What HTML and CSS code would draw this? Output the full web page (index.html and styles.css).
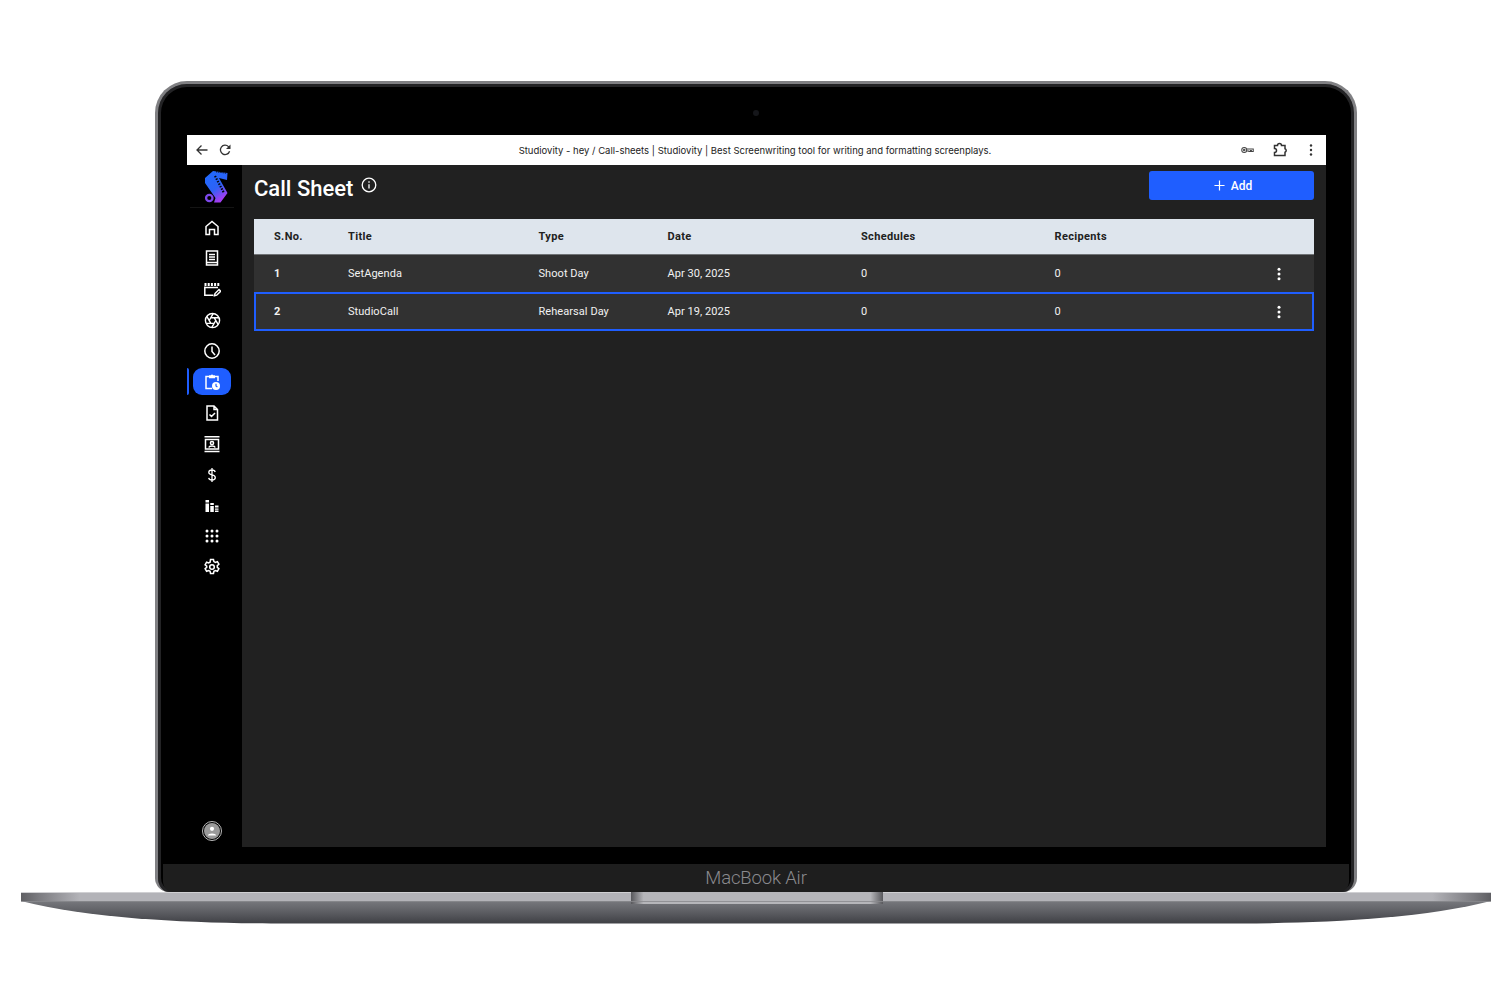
FILE: index.html
```html
<!DOCTYPE html>
<html lang="en">
<head>
<meta charset="utf-8">
<title>Call Sheet</title>
<link rel="stylesheet" href="styles.css">
</head>
<body>
<div class="stage">
  <div class="lid">
    <div class="bezel-top"><span class="camera"></span></div>
    <div class="screen">
      <div class="toolbar">
        <div class="nav-btns">
          <svg class="tb-icon" viewBox="0 0 14 14"><path d="M12.500 7H2M6.500 2.500 2 7l4.500 4.500"/></svg>
          <svg class="tb-icon" viewBox="0 0 14 14"><path d="M11.600 8.300A4.700 4.700 0 1 1 10.500 3.600L11.800 5"/><path class="solid" d="M12.500 1.500V6H8z"/></svg>
        </div>
        <div class="page-title">Studiovity - hey / Call-sheets | Studiovity | Best Screenwriting tool for writing and formatting screenplays.</div>
        <div class="tb-right">
          <svg class="key" viewBox="0 0 14 8"><circle cx="3.500" cy="4" r="2.700"/><circle cx="3.500" cy="4" r=".8"/><path d="M6.200 3h7v2.500h-2v-1h-1v1H8.500V5H6.200"/></svg>
          <svg class="puzzle" viewBox="0 0 16 16"><path d="M2.500 3.500h3a2 2 0 0 1 4 0h3.500v3.300a1.800 1.800 0 0 1 0 3.400v3.300H2.500v-3a2 2 0 0 0 0-4z"/></svg>
          <svg class="dots-dark" viewBox="0 0 4 14"><circle cx="2" cy="2.500" r="1.200"/><circle cx="2" cy="7" r="1.200"/><circle cx="2" cy="11.500" r="1.200"/></svg>
        </div>
      </div>
      <div class="app">
        <aside class="sidebar">
          <svg class="logo" viewBox="0 0 23 32">
            <defs><linearGradient id="lg" x1="0" y1="0" x2=".5" y2="1"><stop offset="0" stop-color="#1f6bff"/><stop offset=".62" stop-color="#2c62f5"/><stop offset="1" stop-color="#a23df2"/></linearGradient></defs>
            <path fill="url(#lg)" d="M0 7 8 0 22.500 2 22 9 14 7 22.500 22 15.500 31.500H9L10.500 27 0 12Z"/>
            <path class="perf" d="M10 5 19 22"/>
            <path class="perf-top" d="M11 .8 22 2.300"/>
            <circle cx="4.300" cy="27" r="3.200" fill="none" stroke="#7d48ea" stroke-width="2.300"/>
          </svg>
          <div class="side-rule"></div>
          <nav class="side-nav">
            <a class="side-item"><svg viewBox="0 0 18 18"><path d="M3 7.500 9 2.500l6 5V15.500h-3.500V10.500h-5V15.500H3z"/></svg></a>
            <a class="side-item"><svg viewBox="0 0 18 18"><path d="M3.500 2h11v14h-11zM6 5.500h6M6 8h6M6 10.500h6M3.500 13.500h11"/></svg></a>
            <a class="side-item"><svg viewBox="0 0 18 18"><path class="stripes" d="M1.500 4.500h15"/><path d="M1.800 6.500V15.200H10.500M1.800 7.500H15"/><path d="M11.500 15.800l.5-2.300 4-4 1.700 1.700-4 4z"/></svg></a>
            <a class="side-item"><svg viewBox="0 0 24 24" class="aperture"><circle cx="12" cy="12" r="10"/><path d="M14.310 8l5.740 9.940M9.690 8h11.480M7.380 12l5.740-9.940M9.690 16 3.950 6.060M14.310 16H2.830M16.620 12l-5.740 9.940"/></svg></a>
            <a class="side-item"><svg viewBox="0 0 18 18"><circle cx="9" cy="9" r="7.200"/><path d="M9 4.500V9.500l3 3.500"/></svg></a>
            <a class="side-item is-active"><svg viewBox="0 0 18 18"><path d="M6 3.500H3v12h6M12 3.500h3v4.500"/><path class="fillw" d="M6 2.200h1.800a1.300 1.300 0 0 1 2.400 0H12v3H6z"/><circle class="fillw" cx="13" cy="13" r="4"/><path class="inv" d="M13 10.800V13l1.400 1"/></svg></a>
            <a class="side-item"><svg viewBox="0 0 18 18"><path d="M4 2h7l3.500 3.500V16H4zM11 2v3.500h3.500M6.500 10.500 8.500 12.500 12 9"/></svg></a>
            <a class="side-item"><svg viewBox="0 0 18 18"><path d="M2.500 4.500h13v9.500h-13zM1.500 1.800h15M1.500 16.500h15"/><circle cx="9" cy="8" r="1.600"/><path d="M5.800 12.500c.6-2 5.800-2 6.400 0"/></svg></a>
            <a class="side-item"><svg viewBox="0 0 18 18" class="thin"><path d="M12.200 6c-.3-1.400-1.500-2-3.200-2-1.800 0-3.200.9-3.200 2.400 0 3.300 6.500 1.800 6.500 5.100 0 1.500-1.400 2.500-3.300 2.500-1.700 0-3-.7-3.300-2.100M9 2v14"/></svg></a>
            <a class="side-item"><svg viewBox="0 0 18 18"><path class="fillw" d="M2.500 3h3.500v2.500H2.500zM2.500 6.500h3.500V15H2.500zM7.300 6h3.500v2H7.300zM7.300 9h3.500v6H7.300zM12 8.500h3.500v2H12zM12 11.500h3.500v1.300H12zM12 13.500h3.500V15H12z"/></svg></a>
            <a class="side-item"><svg viewBox="0 0 18 18"><g class="fillw"><circle cx="4" cy="4" r="1.500"/><circle cx="9" cy="4" r="1.500"/><circle cx="14" cy="4" r="1.500"/><circle cx="4" cy="9" r="1.500"/><circle cx="9" cy="9" r="1.500"/><circle cx="14" cy="9" r="1.500"/><circle cx="4" cy="14" r="1.500"/><circle cx="9" cy="14" r="1.500"/><circle cx="14" cy="14" r="1.500"/></g></svg></a>
            <a class="side-item"><svg viewBox="0 0 18 18"><path d="M7.500 1.500h3l.4 2.100 1.500.8 2-.8 1.500 2.600-1.600 1.400v1.700l1.600 1.400-1.500 2.600-2-.8-1.500.8-.4 2.100h-3l-.4-2.100-1.500-.8-2 .8-1.500-2.600 1.600-1.400V8.200L2.100 6.800 3.600 4.200l2 .8 1.500-.8z"/><circle cx="9" cy="9" r="2.300"/></svg></a>
          </nav>
          <div class="avatar"><span class="avatar-in"><svg viewBox="0 0 12 12"><circle cx="6" cy="3.800" r="2.100"/><path d="M1.800 10.500c0-2.700 8.400-2.700 8.400 0z"/></svg></span></div>
        </aside>
        <main class="main">
          <header class="page-head">
            <div class="head-left">
              <h1 class="heading">Call Sheet</h1>
              <svg class="info" viewBox="0 0 16 16"><circle cx="8" cy="8" r="6.800"/><path d="M8 7.200V11.500"/><path d="M8 4.200V5.700"/></svg>
            </div>
            <button class="add-btn"><svg viewBox="0 0 12 12"><path d="M6 .5v11M.5 6h11"/></svg><span>Add</span></button>
          </header>
          <div class="table">
            <div class="row head"><div>S.No.</div><div>Title</div><div>Type</div><div>Date</div><div>Schedules</div><div>Recipents</div><div></div></div>
            <div class="row body"><div class="sno">1</div><div>SetAgenda</div><div>Shoot Day</div><div>Apr 30, 2025</div><div>0</div><div>0</div><div class="act"><svg class="kebab" viewBox="0 0 4 14"><circle cx="2" cy="2.200" r="1.500"/><circle cx="2" cy="7" r="1.500"/><circle cx="2" cy="11.800" r="1.500"/></svg></div></div>
            <div class="row body selected"><div class="sno">2</div><div>StudioCall</div><div>Rehearsal Day</div><div>Apr 19, 2025</div><div>0</div><div>0</div><div class="act"><svg class="kebab" viewBox="0 0 4 14"><circle cx="2" cy="2.200" r="1.500"/><circle cx="2" cy="7" r="1.500"/><circle cx="2" cy="11.800" r="1.500"/></svg></div></div>
          </div>
        </main>
      </div>
    </div>
    <div class="chin-black"></div>
    <div class="chin"><span class="model">MacBook Air</span></div>
  </div>
  <svg class="base" viewBox="0 0 1470 32" aria-hidden="true">
    <defs>
      <linearGradient id="band" x1="0" x2="1" y1="0" y2="0">
        <stop offset="0" stop-color="#5f5f63"/><stop offset=".012" stop-color="#7b7b80"/><stop offset=".04" stop-color="#b3b3b8"/><stop offset=".96" stop-color="#b3b3b8"/><stop offset=".988" stop-color="#7b7b80"/><stop offset="1" stop-color="#5f5f63"/>
      </linearGradient>
      <linearGradient id="under" x1="0" x2="0" y1="0" y2="1">
        <stop offset="0" stop-color="#77787d"/><stop offset=".4" stop-color="#626368"/><stop offset="1" stop-color="#3f4045"/>
      </linearGradient>
      <linearGradient id="notch" x1="0" x2="1" y1="0" y2="0">
        <stop offset="0" stop-color="#58585c"/><stop offset=".05" stop-color="#b6b6ba"/><stop offset=".95" stop-color="#b6b6ba"/><stop offset="1" stop-color="#58585c"/>
      </linearGradient>
    </defs>
    <path fill="url(#under)" d="M0 9H1470C1400 27 1300 31 1220 31.500H250C170 31 70 27 0 9Z"/>
    <rect width="1470" height="9" fill="url(#band)"/>
    <rect width="1470" height="1" fill="#d0d0d3"/>
    <rect x="610" width="252" height="12" fill="url(#notch)"/>
    <rect x="0" y="9" width="1470" height=".8" fill="#8a8a8e"/>
  </svg>
</div>
</body>
</html>
```
FILE: styles.css
```css
* { box-sizing: border-box; }
html, body { margin: 0; height: 982px; background: #fff; overflow: hidden; }
body { font-family: Roboto, "Liberation Sans", sans-serif; color: #fff; }

.stage { display: flex; flex-direction: column; align-items: center; padding-top: 81px; }

.lid {
  width: 1202px; height: 811px;
  display: flex; flex-direction: column;
  background: #000;
  border: 3px solid #808083; border-bottom: 0;
  border-radius: 32px 32px 14px 14px / 32px 32px 14px 14px;
  box-shadow: inset 0 0 0 3px #232325;
}
.bezel-top { height: 51px; flex: none; display: flex; align-items: flex-start; justify-content: center; padding-top: 26px; }
.camera { width: 6px; height: 6px; border-radius: 50%; background: #15161a; }

.screen { width: 1139px; height: 712px; flex: none; margin-left: 29px; display: flex; flex-direction: column; }

.toolbar { height: 30px; flex: none; background: #fff; color: #222; display: grid; grid-template-columns: 1fr auto 1fr; align-items: center; padding: 0 11px 0 8px; }
.nav-btns { display: flex; gap: 9px; align-items: center; }
.tb-icon { width: 14px; height: 14px; fill: none; stroke: #333; stroke-width: 1.300; }
.tb-icon .solid { fill: #333; stroke: none; }
.page-title { text-align: center; font-family: Inter, Roboto, sans-serif; font-size: 9.500px; color: #222; white-space: nowrap; }
.tb-right { display: flex; align-items: center; justify-content: flex-end; gap: 18px; }
.key { width: 13px; height: 8px; fill: none; stroke: #444; stroke-width: 1.100; }
.puzzle { width: 16px; height: 16px; fill: none; stroke: #333; stroke-width: 1.500; }
.dots-dark { width: 4px; height: 14px; fill: #333; margin-left: 3px; margin-right: 2px; }

.app { flex: 1; display: flex; min-height: 0; }

.sidebar { width: 55px; flex: none; background: #000; padding-right: 5px; display: flex; flex-direction: column; align-items: center; }
.logo { width: 23px; height: 32px; margin: 6px 0 0 8px; flex: none; }
.perf { fill: none; stroke: #05060c; stroke-width: 2.200; stroke-dasharray: 1.500 1.300; }
.perf-top { fill: none; stroke: #05060c; stroke-width: 1; stroke-dasharray: 1.200 1; }
.side-rule { width: 44px; height: 1px; background: #141414; margin-top: 4px; flex: none; }
.side-nav { display: flex; flex-direction: column; margin-top: 6px; align-items: center; width: 100%; }
.side-item { width: 38px; height: 27px; margin-bottom: 3.900px; border-radius: 9px; display: flex; align-items: center; justify-content: center; position: relative; }
.side-item svg { width: 18px; height: 18px; fill: none; stroke: #fff; stroke-width: 1.500; }
.side-item svg .fillw { fill: #fff; stroke: none; }
.side-item svg .stripes { stroke-width: 3; stroke-dasharray: 2 1.200; }
.side-item svg.aperture { stroke-width: 2; width: 17px; height: 17px; }
.side-item svg.thin { stroke-width: 1.300; }
.side-item.is-active { background: #1f5eff; }
.side-item.is-active .inv { stroke: #1f5eff; stroke-width: 1.200; }
.side-item.is-active::before { content: ""; position: absolute; left: -6px; top: 0; width: 2px; height: 27px; background: #1f5eff; border-radius: 0 2px 2px 0; }

.avatar { margin-top: auto; margin-bottom: 6px; width: 20px; height: 20px; border-radius: 50%; border: 1px solid #bbb; display: flex; align-items: center; justify-content: center; }
.avatar-in { width: 16px; height: 16px; border-radius: 50%; background: #9a9a9a; display: flex; align-items: center; justify-content: center; }
.avatar-in svg { width: 12px; height: 12px; fill: #fff; }

.main { flex: 1; background: #212121; padding: 6px 12px 0; min-width: 0; }
.page-head { height: 48px; display: flex; justify-content: space-between; align-items: flex-start; }
.head-left { display: flex; align-items: flex-start; gap: 8px; }
.heading { margin: 2px 0 0; font-size: 22px; line-height: 32px; font-weight: 500; color: #fff; }
.info { width: 16px; height: 16px; margin-top: 6px; fill: none; stroke: #fff; stroke-width: 1.300; }
.add-btn { width: 165px; height: 29px; border: 0; border-radius: 3px; background: #1f5eff; color: #fff; font: 500 12px Roboto, sans-serif; display: flex; align-items: center; justify-content: center; gap: 6px; padding: 0 0 0 3px; }
.add-btn svg { width: 11px; height: 11px; fill: none; stroke: #fff; stroke-width: 1.300; }

.table { font-size: 11px; letter-spacing: .06px; }
.row { display: grid; grid-template-columns: 94px 190.500px 129px 193.500px 193.500px 1fr 60px; align-items: center; }
.row > div:first-child { padding-left: 20px; }
.row.head { height: 36px; background: #dee5ed; color: #212121; font-weight: 700; border-bottom: 1px solid #6f7275; letter-spacing: .35px; }
.row.body { height: 37px; background: #313131; color: #f2f2f2; }
.row.selected { height: 39px; box-shadow: inset 0 0 0 2px #1f5eff; }
.sno { font-weight: 700; }
.act { display: flex; justify-content: flex-end; padding-right: 33px; }
.kebab { width: 4px; height: 14px; fill: #fff; }

.chin-black { flex: 1; }
.chin { height: 28px; flex: none; margin: 0 5px; background: #1e1e1e; border-radius: 0 0 10px 10px; display: flex; align-items: center; justify-content: center; }
.model { font-size: 18.500px; font-weight: 300; color: #8a8a8e; letter-spacing: -.15px; }

.base { width: 1470px; height: 32px; flex: none; display: block; }
```
